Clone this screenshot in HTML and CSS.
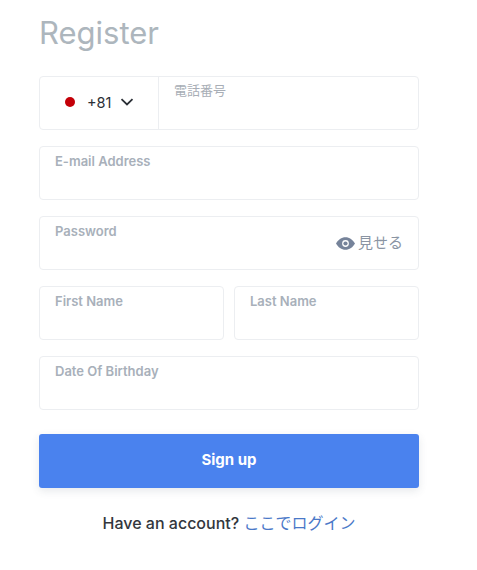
FILE: index.html
```html
<!DOCTYPE html>
<html lang="ja">
<head>
<meta charset="utf-8">
<title>Register</title>
<link rel="stylesheet" href="styles.css">
</head>
<body>
<main class="form">
  <h1 class="title">Register</h1>
  <div class="field phone">
    <div class="country">
      <span class="flag"></span>
      <span class="code">+81</span>
      <svg class="chev" width="14" height="8" viewBox="0 0 14 8"><path d="M1.5 1.2 7 6.4l5.500-5.200" fill="none" stroke="#2b2f36" stroke-width="1.800"/></svg>
    </div>
    <div class="phone-input"><span class="label cjk">電話番号</span></div>
  </div>
  <div class="field"><span class="label">E-mail Address</span></div>
  <div class="field pw">
    <span class="label">Password</span>
    <span class="show">
      <svg width="19" height="13" viewBox="0 0 18 12"><path fill-rule="evenodd" d="M9 0c3.800 0 7 2.500 9 6-2 3.500-5.200 6-9 6s-7-2.500-9-6c2-3.500 5.200-6 9-6Zm0 2.800a3.200 3.200 0 1 0 0 6.400 3.200 3.200 0 0 0 0-6.400Z" fill="#76839a"/><circle cx="9" cy="6" r="2" fill="#76839a"/></svg>
      <span class="show-text">見せる</span>
    </span>
  </div>
  <div class="row">
    <div class="field"><span class="label">First Name</span></div>
    <div class="field"><span class="label">Last Name</span></div>
  </div>
  <div class="field"><span class="label">Date Of Birthday</span></div>
  <button class="submit" type="button">Sign up</button>
  <p class="foot">Have an account? <a class="link" href="#">ここでログイン</a></p>
</main>
</body>
</html>
```
FILE: styles.css
```css
* { box-sizing: border-box; }
html, body { margin: 0; background: #fff; }
body { font-family: Inter, "Noto Sans CJK JP", sans-serif; width: 477px; height: 570px; overflow: hidden; }
.form { width: 380px; margin-left: 39px; padding-top: 11px; display: flex; flex-direction: column; }
.title { margin: 0 0 22px; font-size: 31px; line-height: 43px; font-weight: 400; color: #adb6bd; font-family: Inter, sans-serif; }
.field { position: relative; height: 54px; border: 1px solid #eceef1; border-radius: 4px; padding: 6px 15px; margin-bottom: 16px; background: #fff; }
.label { display: block; font-size: 13px; line-height: 16px; font-weight: 600; color: #a8b0ba; }
.label.cjk { font-weight: 400; font-size: 13px; color: #a8aeb6; }
.phone { display: flex; padding: 0; }
.country { width: 119px; border-right: 1px solid #eceef1; display: flex; align-items: center; padding: 0 0 2px 25px; }
.flag { width: 10px; height: 10px; border-radius: 50%; background: #c40008; margin-right: 12px; }
.code { font-size: 14.500px; color: #2b2f36; margin-right: 9px; }
.phone-input { padding: 5px 15px; }
.pw .show { position: absolute; right: 15px; top: 17px; display: flex; align-items: center; gap: 3px; }
.show-text { font-size: 15px; line-height: 18px; color: #8a94a3; }
.row { display: grid; grid-template-columns: 185px 185px; gap: 10px; }
.submit { height: 54px; margin-top: 8px; border: 0; border-radius: 3px; background: #4a82ee; color: #fff; font: 700 15px/50px Inter, sans-serif; padding: 0 0 2px; box-shadow: 0 3px 8px rgba(60,70,90,.12); }
.foot { margin: 25px 0 0; text-align: center; font-size: 16px; line-height: 20px; font-weight: 500; color: #33373d; }
.link { color: #4a78c8; text-decoration: none; font-weight: 400; }
```
